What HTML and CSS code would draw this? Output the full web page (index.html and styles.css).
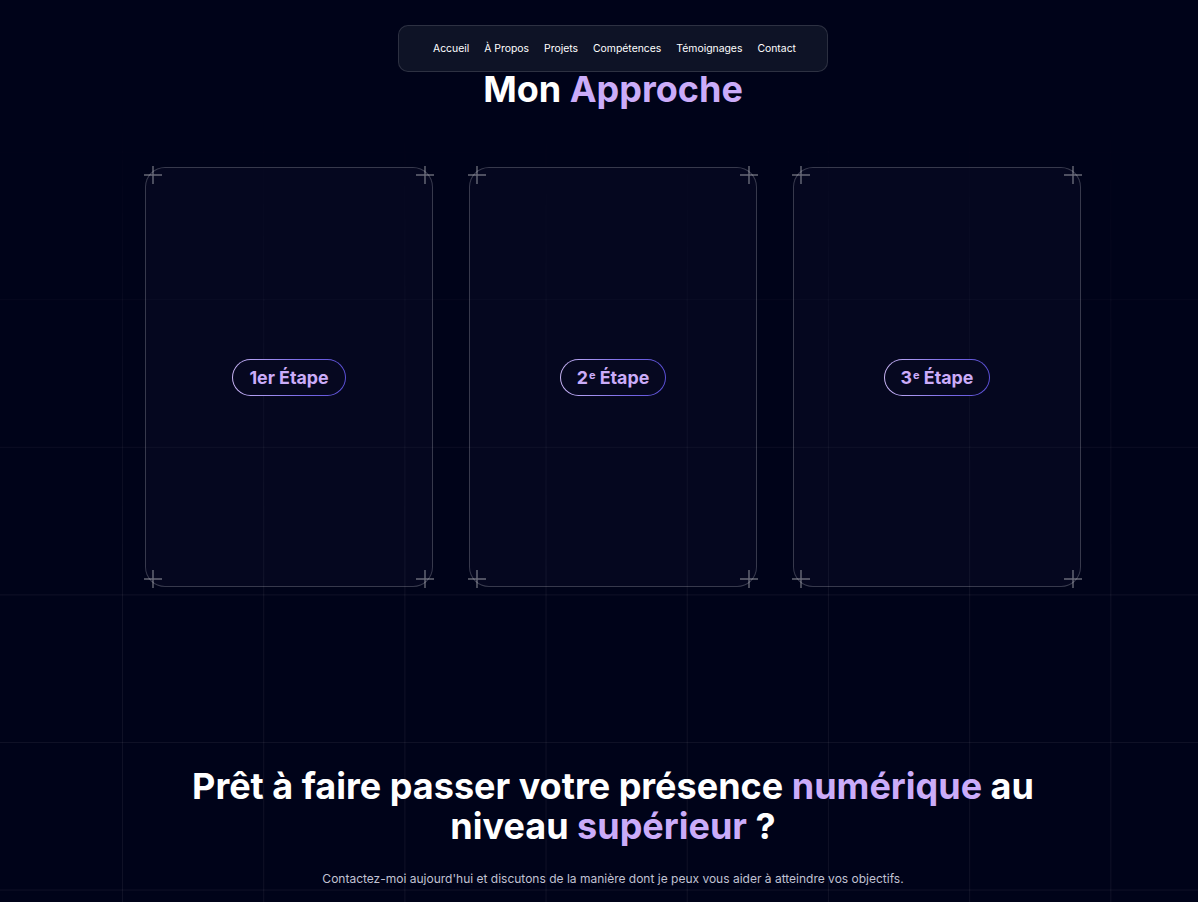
FILE: index.html
```html
<!DOCTYPE html>
<html lang="fr">
<head>
<meta charset="utf-8">
<title>Mon Approche</title>
<link rel="stylesheet" href="styles.css">
</head>
<body>
<div class="page">
  <nav class="floating-nav">
    <a href="#">Accueil</a>
    <a href="#">À Propos</a>
    <a href="#">Projets</a>
    <a href="#">Compétences</a>
    <a href="#">Témoignages</a>
    <a href="#">Contact</a>
  </nav>

  <section class="approach">
    <h2 class="title">Mon <span class="accent">Approche</span></h2>
    <div class="cards">
      <div class="card">
        <svg class="plus tl" viewBox="0 0 18 18"><path d="M9 0v18M0 9h18"/></svg>
        <svg class="plus tr" viewBox="0 0 18 18"><path d="M9 0v18M0 9h18"/></svg>
        <svg class="plus bl" viewBox="0 0 18 18"><path d="M9 0v18M0 9h18"/></svg>
        <svg class="plus br" viewBox="0 0 18 18"><path d="M9 0v18M0 9h18"/></svg>
        <span class="badge">1er Étape</span>
      </div>
      <div class="card">
        <svg class="plus tl" viewBox="0 0 18 18"><path d="M9 0v18M0 9h18"/></svg>
        <svg class="plus tr" viewBox="0 0 18 18"><path d="M9 0v18M0 9h18"/></svg>
        <svg class="plus bl" viewBox="0 0 18 18"><path d="M9 0v18M0 9h18"/></svg>
        <svg class="plus br" viewBox="0 0 18 18"><path d="M9 0v18M0 9h18"/></svg>
        <span class="badge">2<sup>e</sup> Étape</span>
      </div>
      <div class="card">
        <svg class="plus tl" viewBox="0 0 18 18"><path d="M9 0v18M0 9h18"/></svg>
        <svg class="plus tr" viewBox="0 0 18 18"><path d="M9 0v18M0 9h18"/></svg>
        <svg class="plus bl" viewBox="0 0 18 18"><path d="M9 0v18M0 9h18"/></svg>
        <svg class="plus br" viewBox="0 0 18 18"><path d="M9 0v18M0 9h18"/></svg>
        <span class="badge">3<sup>e</sup> Étape</span>
      </div>
    </div>
  </section>

  <section class="cta">
    <h2 class="cta-title">Prêt à faire passer votre présence <span class="accent">numérique</span> au niveau <span class="accent">supérieur</span> ?</h2>
    <p class="cta-text">Contactez-moi aujourd'hui et discutons de la manière dont je peux vous aider à atteindre vos objectifs.</p>
  </section>
</div>
</body>
</html>
```

FILE: styles.css
```css
html, body {
  margin: 0;
  padding: 0;
}

body {
  background: #000319;
  font-family: Inter, "Noto Sans", sans-serif;
  color: #ffffff;
  height: 902px;
  overflow: hidden;
  position: relative;
}

body::before {
  content: "";
  position: absolute;
  inset: 0;
  z-index: 1;
  pointer-events: none;
  background-image:
    linear-gradient(to right, rgba(255, 255, 255, 0.06) 1px, transparent 1px),
    linear-gradient(to bottom, rgba(255, 255, 255, 0.06) 1px, transparent 1px);
  background-size: 141.2px 147.6px;
  background-position: 122px 4px;
  -webkit-mask-image: linear-gradient(to bottom, transparent 120px, rgba(0,0,0,0.5) 320px, #000 600px);
  mask-image: linear-gradient(to bottom, transparent 120px, rgba(0,0,0,0.5) 320px, #000 600px);
}

.page {
  position: relative;
  width: 1226px;
  display: flex;
  flex-direction: column;
  align-items: center;
}

.floating-nav {
  position: absolute;
  top: 25px;
  left: 50%;
  transform: translateX(-50%);
  z-index: 10;
  display: flex;
  align-items: center;
  gap: 15px;
  height: 45px;
  padding: 0 31px 0 34px;
  background: #0e1326;
  border: 1px solid rgba(255, 255, 255, 0.13);
  border-radius: 10px;
}

.floating-nav a {
  color: #ffffff;
  text-decoration: none;
  font-size: 10.4px;
  line-height: 14px;
  white-space: nowrap;
}

.approach {
  display: flex;
  flex-direction: column;
  align-items: center;
}

.title {
  margin: 0;
  padding-top: 69px;
  font-size: 36px;
  line-height: 40px;
  font-weight: 700;
}

.accent {
  color: #cbacf9;
}

.cards {
  display: flex;
  gap: 36px;
  margin-top: 58px;
}

.card {
  position: relative;
  width: 288px;
  height: 420px;
  box-sizing: border-box;
  border: 1px solid rgba(255, 255, 255, 0.2);
  border-radius: 20px;
  background: rgba(40, 44, 80, 0.12);
  display: flex;
  align-items: center;
  justify-content: center;
}

.plus {
  position: absolute;
  width: 18px;
  height: 18px;
  fill: none;
  stroke: rgba(255, 255, 255, 0.4);
  stroke-width: 1.4;
}

.plus.tl { top: -2px; left: -2px; }
.plus.tr { top: -2px; right: -2px; }
.plus.bl { bottom: -2px; left: -2px; }
.plus.br { bottom: -2px; right: -2px; }

.badge {
  position: relative;
  z-index: 2;
  display: inline-block;
  height: 37px;
  line-height: 35px;
  box-sizing: border-box;
  padding: 0 16px;
  border-radius: 999px;
  border: 1px solid transparent;
  background:
    linear-gradient(#060820, #060820) padding-box,
    linear-gradient(90deg, #c9b5f5, #7a6ae6 60%, #5a4fd6) border-box;
  color: #cbacf9;
  font-size: 17.8px;
  font-weight: 700;
  white-space: nowrap;
}

.badge sup {
  font-size: 11px;
  line-height: 0;
  vertical-align: 5px;
  margin-left: 1px;
}

.cta {
  display: flex;
  flex-direction: column;
  align-items: center;
  margin-top: 179px;
}

.cta-title {
  margin: 0;
  max-width: 880px;
  text-align: center;
  font-size: 36px;
  line-height: 40px;
  font-weight: 700;
}

.cta-text {
  margin: 25px 0 0;
  font-size: 12px;
  line-height: 16px;
  color: #c1c2d3;
}
```
